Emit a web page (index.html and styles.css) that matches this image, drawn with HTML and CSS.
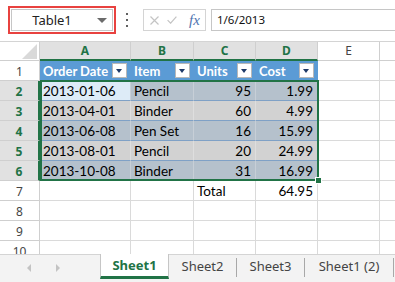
FILE: index.html
```html
<!DOCTYPE html>
<html lang="en">
<head>
    <meta charset="UTF-8">
    <meta name="viewport" content="width=device-width, initial-scale=1.0">
    <title>Table1 - Sheet1</title>
    <link rel="stylesheet" href="styles.css">
</head>
<body>
    <div class="app">
        <div class="toolbar">
            <div class="name-mark">
                <div class="namebox">
                    <span class="label">Table1</span>
                    <span class="caret"></span>
                </div>
            </div>
            <div class="dots"><i></i><i></i><i></i></div>
            <div class="fx-box">
                <svg class="icon-x" width="9" height="9" viewBox="0 0 9 9"><path d="M0.5 0.5 L8.5 8.5 M8.5 0.5 L0.5 8.5" stroke="#c4c4c4" stroke-width="1.2" fill="none"/></svg>
                <svg class="icon-ok" width="10" height="8" viewBox="0 0 10 8"><path d="M0.6 4.2 L3.6 7.2 L9.4 0.6" stroke="#c4c4c4" stroke-width="1.2" fill="none"/></svg>
                <span class="fx">fx</span>
            </div>
            <div class="formula">1/6/2013</div>
        </div>

        <div class="sheet">
            <!-- column headers -->
            <div class="corner">
                <svg width="39" height="18" viewBox="0 0 39 18"><polygon points="37,2 37,17 22,17" fill="#d9d9d9"/></svg>
            </div>
            <div class="col-hd sel">A</div>
            <div class="col-hd sel">B</div>
            <div class="col-hd sel">C</div>
            <div class="col-hd sel">D</div>
            <div class="col-hd">E</div>
            <div class="col-hd"></div>

            <!-- row 1: table header -->
            <div class="row-hd">1</div>
            <div class="cell th">Order Date<span class="filter"></span></div>
            <div class="cell th">Item<span class="filter"></span></div>
            <div class="cell th">Units<span class="filter"></span></div>
            <div class="cell th">Cost<span class="filter"></span></div>
            <div class="cell"></div>
            <div class="cell"></div>

            <div class="row-hd sel">2</div>
            <div class="cell active">2013-01-06</div>
            <div class="cell band">Pencil</div>
            <div class="cell band num">95</div>
            <div class="cell band num">1.99</div>
            <div class="cell"></div>
            <div class="cell"></div>

            <div class="row-hd sel">3</div>
            <div class="cell plain">2013-04-01</div>
            <div class="cell plain">Binder</div>
            <div class="cell plain num">60</div>
            <div class="cell plain num">4.99</div>
            <div class="cell"></div>
            <div class="cell"></div>

            <div class="row-hd sel">4</div>
            <div class="cell band">2013-06-08</div>
            <div class="cell band">Pen Set</div>
            <div class="cell band num">16</div>
            <div class="cell band num">15.99</div>
            <div class="cell"></div>
            <div class="cell"></div>

            <div class="row-hd sel">5</div>
            <div class="cell plain">2013-08-01</div>
            <div class="cell plain">Pencil</div>
            <div class="cell plain num">20</div>
            <div class="cell plain num">24.99</div>
            <div class="cell"></div>
            <div class="cell"></div>

            <div class="row-hd sel">6</div>
            <div class="cell band">2013-10-08</div>
            <div class="cell band">Binder</div>
            <div class="cell band num">31</div>
            <div class="cell band num">16.99</div>
            <div class="cell"></div>
            <div class="cell"></div>

            <div class="row-hd">7</div>
            <div class="cell"></div>
            <div class="cell"></div>
            <div class="cell">Total</div>
            <div class="cell num">64.95</div>
            <div class="cell"></div>
            <div class="cell"></div>

            <div class="row-hd">8</div>
            <div class="cell"></div>
            <div class="cell"></div>
            <div class="cell"></div>
            <div class="cell"></div>
            <div class="cell"></div>
            <div class="cell"></div>

            <div class="row-hd">9</div>
            <div class="cell"></div>
            <div class="cell"></div>
            <div class="cell"></div>
            <div class="cell"></div>
            <div class="cell"></div>
            <div class="cell"></div>

            <div class="row-hd">10</div>
            <div class="cell"></div>
            <div class="cell"></div>
            <div class="cell"></div>
            <div class="cell"></div>
            <div class="cell"></div>
            <div class="cell"></div>

            <!-- selected range A2:D6 -->
            <div class="selection"><span class="handle"></span></div>
        </div>

        <div class="tabbar">
            <div class="nav">
                <span class="arrow prev"></span>
                <span class="arrow next"></span>
            </div>
            <div class="tab active">Sheet1</div>
            <div class="tab">Sheet2</div>
            <span class="sep"></span>
            <div class="tab">Sheet3</div>
            <span class="sep"></span>
            <div class="tab wide">Sheet1 (2)</div>
            <span class="sep"></span>
        </div>
    </div>
</body>
</html>
```

FILE: styles.css
```css
* {
    box-sizing: border-box;
}

body {
    margin: 0;
    font-family: "Noto Sans", sans-serif;
    background: #fff;
}

.app {
    width: 395px;
    height: 282px;
    display: flex;
    flex-direction: column;
    overflow: hidden;
}

/* name box + formula bar */
.toolbar {
    height: 42px;
    flex: none;
    display: flex;
    align-items: flex-start;
    padding: 6px 0 0 8px;
    border-bottom: 1px solid #d4d4d4;
}

.name-mark {
    border: 2px solid #e8423f;
    padding: 1px;
}

.namebox {
    width: 102px;
    height: 22px;
    border: 1px solid #c6c6c6;
    display: flex;
    align-items: center;
    font-size: 13px;
    color: #222;
}

.namebox .label {
    flex: 1;
    text-align: center;
}

.namebox .caret {
    width: 0;
    height: 0;
    margin: 0 5px;
    border-left: 5px solid transparent;
    border-right: 5px solid transparent;
    border-top: 5px solid #6b6b6b;
}

.dots {
    margin: 7px 0 0 10px;
    display: flex;
    flex-direction: column;
    gap: 4px;
}

.dots i {
    display: block;
    width: 2px;
    height: 2px;
    background: #606060;
}

.fx-box {
    margin: 3px 0 0 15px;
    width: 63px;
    height: 22px;
    border: 1px solid #d4d4d4;
    display: flex;
    align-items: center;
    padding-left: 6px;
}

.icon-ok {
    margin-left: 8px;
}

.fx {
    margin-left: 12px;
    font-family: "Liberation Serif", serif;
    font-style: italic;
    font-size: 15px;
    color: #4f74b0;
}

.formula {
    flex: 1;
    margin: 3px -10px 0 5px;
    height: 22px;
    border: 1px solid #c6c6c6;
    padding-left: 5px;
    font-size: 11.5px;
    line-height: 20px;
    color: #111;
}

/* worksheet grid */
.sheet {
    flex: 1;
    position: relative;
    display: grid;
    grid-template-columns: 40px 91px 63px 62px 62px 62px 62px;
    grid-template-rows: 19px repeat(10, 20px);
    overflow: hidden;
    font-family: Lato, sans-serif;
    font-size: 13.5px;
}

.corner,
.col-hd,
.row-hd {
    font-family: "Noto Sans", sans-serif;
    font-size: 12px;
    color: #444;
    background: #fff;
    border-right: 1px solid #cfcfcf;
    border-bottom: 1px solid #cfcfcf;
}

.col-hd {
    text-align: center;
    line-height: 18px;
}

.col-hd.sel {
    background: #e1e1e1;
    color: #217346;
    font-weight: bold;
    border-bottom: 2px solid #217346;
}

.row-hd {
    text-align: center;
    line-height: 21px;
}

.row-hd.sel {
    background: #e1e1e1;
    color: #217346;
    font-weight: bold;
    border-right: 2px solid #217346;
}

.cell {
    border-right: 1px solid #dadada;
    border-bottom: 1px solid #dadada;
    padding: 0 4px 0 3px;
    line-height: 20px;
    white-space: nowrap;
    overflow: hidden;
    color: #000;
}

.cell.num {
    text-align: right;
}

.cell.th {
    display: flex;
    align-items: flex-start;
    justify-content: space-between;
    padding-right: 3px;
    background: #5b9bd5;
    border-color: #5b9bd5;
    color: #fff;
    font-size: 13px;
    font-weight: bold;
}

.filter {
    position: relative;
    width: 15px;
    height: 15px;
    margin-top: 2px;
    background: #fff;
    border: 1px solid #b8b8b8;
}

.filter::after {
    content: "";
    position: absolute;
    left: 3px;
    top: 5px;
    border-left: 3.5px solid transparent;
    border-right: 3.5px solid transparent;
    border-top: 4px solid #1f3a68;
}

.cell.band {
    background: #b5c1cc;
    border-right-color: #c7cfd7;
    border-bottom-color: #7fa1c6;
}

.cell.plain {
    background: #d2d2d2;
    border-right-color: #dedede;
    border-bottom-color: #7fa1c6;
}

.cell.active {
    background: #ddebf7;
    border-right-color: #c7cfd7;
    border-bottom-color: #7fa1c6;
}

/* absolutely placed inside its grid area, so it does not take part in auto-placement */
.selection {
    position: absolute;
    grid-column: 2 / 6;
    grid-row: 3 / 8;
    top: -1px;
    left: 0;
    right: -1px;
    bottom: 0;
    border: 2px solid #217346;
    pointer-events: none;
}

.handle {
    position: absolute;
    right: -5px;
    bottom: -5px;
    width: 7px;
    height: 7px;
    background: #217346;
    border: 1px solid #fff;
}

/* sheet tabs */
.tabbar {
    height: 28px;
    flex: none;
    display: flex;
    align-items: flex-start;
    background: #f3f3f3;
    border-top: 1px solid #d4d4d4;
    font-size: 13px;
    color: #444;
}

.nav {
    width: 100px;
    height: 100%;
    display: flex;
    align-items: center;
    padding: 0 0 2px 27px;
    gap: 25px;
}

.arrow {
    width: 0;
    height: 0;
    border-top: 4px solid transparent;
    border-bottom: 4px solid transparent;
}

.arrow.prev {
    border-right: 4px solid #c3c3c3;
}

.arrow.next {
    border-left: 4px solid #c3c3c3;
}

.tab {
    width: 67px;
    height: 24px;
    text-align: center;
    line-height: 22px;
}

.tab.wide {
    width: 88px;
}

.tab.active {
    width: 69px;
    margin-top: -1px;
    height: 25px;
    background: #fff;
    border-left: 1px solid #c6c6c6;
    border-right: 1px solid #c6c6c6;
    border-bottom: 3px solid #217346;
    color: #217346;
    font-weight: bold;
}

.sep {
    width: 1px;
    height: 19px;
    margin-top: 3px;
    background: #a8a8a8;
}
```
